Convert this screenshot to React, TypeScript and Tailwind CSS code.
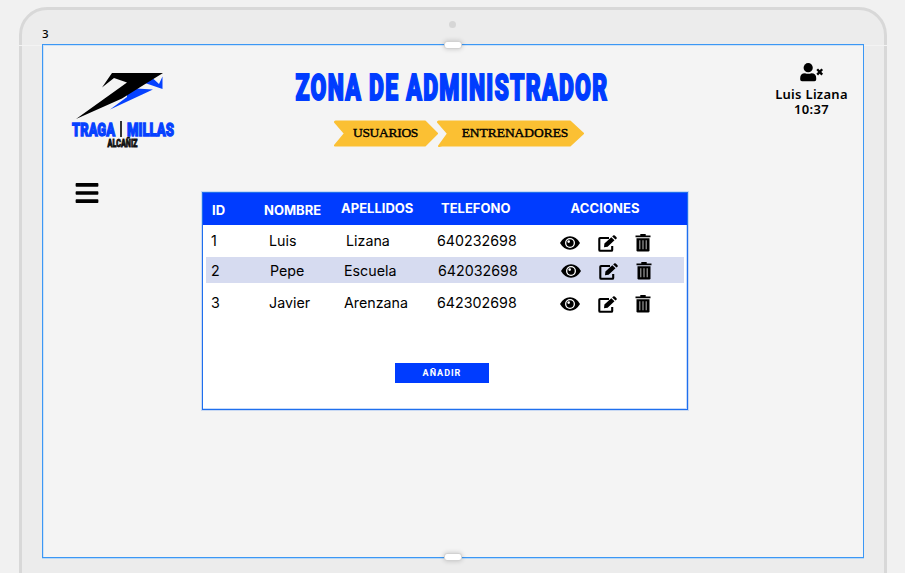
import React from "react";
import { FaBars } from "react-icons/fa";

type Row = {
  id: string; name: string; last: string; phone: string;
  row: string; text: string; c1: string; c2: string; c3: string; icons: string;
};

const rows: Row[] = [
  { id: "1", name: "Luis", last: "Lizana", phone: "640232698", row: "h-[31px]", text: "pt-0", c1: "pl-[2px]", c2: "pl-[4px]", c3: "pl-0", icons: "pl-0 pt-[5px]" },
  { id: "2", name: "Pepe", last: "Escuela", phone: "642032698", row: "mt-px h-[26px] bg-[#d6dbf0]", text: "pt-[2px]", c1: "pl-[3px]", c2: "pl-[2px]", c3: "pl-px", icons: "pl-px pt-[2px]" },
  { id: "3", name: "Javier", last: "Arenzana", phone: "642302698", row: "mt-[6px] h-[28px]", text: "pt-0", c1: "pl-[2px]", c2: "pl-[2px]", c3: "pl-0", icons: "pl-0 pt-[2px]" },
];

function Logo() {
  return (
    <svg width="135" height="84" viewBox="66 68 135 84">
      <path d="M145 83L153 78.500L159 84L162.500 76.500V89Z" fill="#0641ff" />
      <path d="M127 94.500L136 88.500L153 89.500L110 109.500L127 97Z" fill="#0641ff" />
      <path d="M112 73H163L142 86L122 98.500L76 119L127 82.500L114 78L102 87.500Z" fill="#000" />
      <g fontFamily="Roboto" fontWeight="900" stroke="#0641ff" strokeWidth="1.3" fill="#0641ff" fontSize="18.500">
        <text x="72" y="135.500" textLength="43" lengthAdjust="spacingAndGlyphs">TRAGA</text>
        <text x="127" y="135.500" textLength="47" lengthAdjust="spacingAndGlyphs">MILLAS</text>
      </g>
      <rect x="120" y="121" width="2" height="16" fill="#333" />
      <text x="107.500" y="147" textLength="30" lengthAdjust="spacingAndGlyphs" fontFamily="Roboto" fontWeight="900" fontSize="10.500" stroke="#111" strokeWidth="0.8" fill="#111">ALCAÑIZ</text>
    </svg>
  );
}

function UserOff() {
  return (
    <svg width="24" height="19" viewBox="0 0 24 19">
      <circle cx="8.200" cy="4.700" r="4.600" />
      <path d="M5 10.200Q8.200 11.500 11.400 10.200Q16.200 10.400 16.200 15V16.500Q16.200 18.300 14.500 18.300H2Q.2 18.300 .2 16.500V15Q.2 10.400 5 10.200Z" />
      <path d="M17.200 6.200L22.200 11.600M22.200 6.200L17.200 11.600" stroke="#000" strokeWidth="2.300" />
    </svg>
  );
}

function Eye() {
  return (
    <svg width="20" height="14" viewBox="0 0 20 14">
      <path d="M0 7Q3.800 .3 10 .3T20 7Q16.200 13.700 10 13.700T0 7Z" />
      <circle cx="10" cy="7" r="5" fill="white" />
      <circle cx="10" cy="7" r="3.700" />
      <circle cx="8.700" cy="5.600" r="1.300" fill="white" />
    </svg>
  );
}

function Edit() {
  return (
    <svg width="20" height="17" viewBox="0 0 20 17">
      <path d="M11 3H2.200Q1.300 3 1.300 4V15Q1.300 15.800 2.200 15.800H13.300Q14.200 15.800 14.200 15V11" fill="none" stroke="#000" strokeWidth="2.100" />
      <path d="M6 12.200L6.400 8.600L13.300 2.200L16.500 5.200L9.600 11.700ZM14.200 1.400L15.100 .6Q16 0 16.800 .6L18.500 2.200Q19.200 3 18.500 3.700L17.500 4.500Z" />
    </svg>
  );
}

function Trash() {
  return (
    <svg width="16" height="18" viewBox="0 0 16 18">
      <path d="M5.300 0H10.700V1.400H15.500V3.300H.5V1.400H5.300Z" />
      <path d="M1.500 4.300H14.500V16.300Q14.500 17.500 13.300 17.500H2.700Q1.500 17.500 1.500 16.300Z" />
      <path d="M4.800 6.300V15.300M8 6.300V15.300M11.200 6.300V15.300" stroke="#aaa" strokeWidth="1.100" />
    </svg>
  );
}

function Handle() {
  return <div className="h-[8px] w-[18px] rounded-[3px] border border-[#d2d2d2] bg-white shadow-[0_0_5px_rgba(0,0,0,0.2)]" />;
}

export default function App() {
  return (
    <div className="h-[573px] w-[905px] overflow-hidden bg-[#f1f1f1] pl-[19px] pt-[7px] font-['Inter',sans-serif] text-black">
      <div className="relative h-[590px] w-[868px] rounded-t-[28px] border-[3.500px] border-[#d8d8d8] bg-[#ececec] pl-[20px]">
        <div className="absolute left-[427px] top-[11px] h-[7px] w-[7px] rounded-full bg-[#d6d6d6]" />
        <div className="absolute left-[-3px] top-[35px] h-px w-[868px] bg-[#f3f3f3]" />
        <div className="h-[34px] pt-[16px] font-['Noto_Sans',sans-serif] text-[11.500px] font-medium leading-[16px]">3</div>
        <main className="relative h-[514px] w-[822px] border border-[#3b97f5] bg-[#f4f4f4] shadow-[0_1px_0_#b9d8f5,inset_1px_1px_0_#cfe2f5]">
          <div className="absolute left-[401px] top-[-4px]"><Handle /></div>
          <div className="absolute bottom-[-4px] left-[401px]"><Handle /></div>
          <header className="flex h-[108px]">
            <div className="w-[229px] pl-[23px] pt-[23px]"><Logo /></div>
            <div className="w-[375px] pt-[22px]">
              <h1 className="h-[42px] w-[560px] origin-left scale-x-[0.637] whitespace-nowrap pl-[37px] font-['Roboto'] text-[36px] font-black leading-[42px] tracking-[2px] text-[#003cff] [-webkit-text-stroke:1.900px_#003cff]">ZONA DE ADMINISTRADOR</h1>
              <nav className="flex pl-[62px] pt-[11px] font-['Liberation_Serif',serif] text-[13.500px] [-webkit-text-stroke:0.400px_#000]">
                <a className="relative flex h-[27px] w-[103px] items-center justify-center">
                  <svg className="absolute inset-0" width="105" height="27" viewBox="0 0 105 27"><path d="M1 2L11 13.500L1 25.500H91L103 13.500L91 1.500H2Z" fill="#fbc033" stroke="#fbc033" strokeWidth="2" strokeLinejoin="round" /></svg>
                  <span className="relative tracking-[-0.300px]">USUARIOS</span>
                </a>
                <a className="relative flex h-[27px] w-[148px] items-center justify-center pl-[8px]">
                  <svg className="absolute inset-0" width="148" height="27" viewBox="0 0 148 27"><path d="M1 2L11 13.500L2 26L5 25.500H133L146 13.500L133 1.500H2Z" fill="#fbc033" stroke="#fbc033" strokeWidth="2" strokeLinejoin="round" /></svg>
                  <span className="relative tracking-[-0.050px]">ENTRENADORES</span>
                </a>
              </nav>
            </div>
            <div className="ml-auto flex w-[104px] flex-col items-center pl-px pt-[18px] font-['Noto_Sans'] text-[13px] font-semibold leading-[15px] tracking-[0.300px]">
              <UserOff />
              <span className="mt-[5px]">Luis Lizana</span><span>10:37</span>
            </div>
          </header>
          <div className="flex pt-[39px]">
            <FaBars size={26} className="ml-[31px] mt-[-12px]" />
            <section className="ml-[102px] h-[218px] w-[486px] border border-[#1f6fee] bg-white shadow-[0_0_0_1px_rgba(31,111,238,0.2),inset_-1px_-1px_0_rgba(31,111,238,0.25)]">
              <div className="flex h-[32px] bg-[#003cff] text-[13px] font-bold leading-[20px] text-white">
                <span className="w-[61px] pl-[9px] pt-[7px]">ID</span>
                <span className="w-[77px] pt-[7px]">NOMBRE</span>
                <span className="w-[100px] pt-[5px]">APELLIDOS</span>
                <span className="w-[129.500px] pt-[5px]">TELEFONO</span>
                <span className="pt-[5px] tracking-[0.100px]">ACCIONES</span>
              </div>
              {rows.map((r) => (
                <div key={r.id} className={`ml-[3px] flex w-[478px] items-center text-[14.250px] leading-[20px] ${r.row}`}>
                  <div className={`flex ${r.text}`}>
                    <span className="w-[61px] pl-[5px]">{r.id}</span>
                    <span className={`w-[75px] ${r.c1}`}>{r.name}</span>
                    <span className={`w-[95px] ${r.c2}`}>{r.last}</span>
                    <span className={`w-[123px] ${r.c3}`}>{r.phone}</span>
                  </div>
                  <span className={`flex items-center gap-[18px] ${r.icons}`}>
                    <Eye /><Edit /><span className="ml-[-1px]"><Trash /></span>
                  </span>
                </div>
              ))}
              <button className="ml-[192px] mt-[46px] block h-[20px] w-[94px] bg-[#003cff] pt-px font-['Roboto'] text-[9px] font-bold tracking-[1px] text-white">AÑADIR</button>
            </section>
          </div>
        </main>
      </div>
    </div>
  );
}
